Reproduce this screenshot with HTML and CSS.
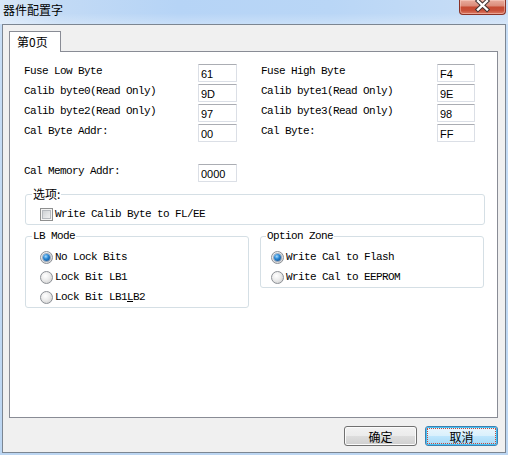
FILE: index.html
```html
<!DOCTYPE html>
<html lang="zh">
<head>
<meta charset="utf-8">
<title>器件配置字</title>
<link rel="stylesheet" href="styles.css">
</head>
<body>
<div class="window">
  <div class="titlebar">
    <span class="title">器件配置字</span>
    <div class="close">
      <svg width="45" height="14" viewBox="0 0 45 14">
        <path d="M18 1 L27 9.5 M27 1 L18 9.5" stroke="#3e3232" stroke-width="4.4" stroke-linecap="square" fill="none"/>
        <path d="M18 1 L27 9.5 M27 1 L18 9.5" stroke="#ffffff" stroke-width="2.4" stroke-linecap="square" fill="none"/>
      </svg>
    </div>
  </div>
  <div class="client">
    <div class="tabstrip"><div class="tab">第0页</div></div>
    <div class="panel">
      <div class="fields">
        <span class="lbl">Fuse Low Byte</span><input class="edit" value="61" readonly><span></span>
        <span class="lbl">Fuse High Byte</span><input class="edit edit-r" value="F4" readonly>
        <span class="lbl">Calib byte0(Read Only)</span><input class="edit" value="9D" readonly><span></span>
        <span class="lbl">Calib byte1(Read Only)</span><input class="edit edit-r" value="9E" readonly>
        <span class="lbl">Calib byte2(Read Only)</span><input class="edit" value="97" readonly><span></span>
        <span class="lbl">Calib byte3(Read Only)</span><input class="edit edit-r" value="98" readonly>
        <span class="lbl">Cal Byte Addr:</span><input class="edit" value="00" readonly><span></span>
        <span class="lbl">Cal Byte:</span><input class="edit edit-r" value="FF" readonly>
      </div>
      <div class="memrow">
        <span class="lbl memlbl">Cal Memory Addr:</span><input class="edit" value="0000" readonly>
      </div>
      <div class="group opts">
        <span class="legend cjk">选项:</span>
        <div class="opt"><span class="check"></span><span class="lbl">Write Calib Byte to FL/EE</span></div>
      </div>
      <div class="grouprow">
        <div class="group lbmode">
          <span class="legend">LB Mode</span>
          <div class="opt"><span class="radio on"></span><span class="lbl">No Lock Bits</span></div>
          <div class="opt"><span class="radio"></span><span class="lbl">Lock Bit LB1</span></div>
          <div class="opt"><span class="radio"></span><span class="lbl">Lock Bit LB1<u>L</u>B2</span></div>
        </div>
        <div class="group zone">
          <span class="legend zlegend">Option Zone</span>
          <div class="opt"><span class="radio on"></span><span class="lbl">Write Cal to Flash</span></div>
          <div class="opt"><span class="radio"></span><span class="lbl">Write Cal to EEPROM</span></div>
        </div>
      </div>
    </div>
    <div class="buttons">
      <button class="btn">确定</button>
      <button class="btn default">取消</button>
    </div>
  </div>
</div>
</body>
</html>
```
FILE: styles.css
```css
html, body {
  margin: 0;
  padding: 0;
  background: #c4dbf4;
}
.window {
  width: 508px;
  height: 455px;
  display: flex;
  flex-direction: column;
  background: linear-gradient(#c8def6, #bcd6f2);
  overflow: hidden;
}
.titlebar {
  height: 24px;
  flex: none;
  display: flex;
  justify-content: space-between;
  align-items: flex-start;
  padding: 0 2px 0 3px;
  background:
    linear-gradient(to bottom, rgba(255,255,255,0) 0%, rgba(255,255,255,0) 55%, rgba(255,255,255,0.25) 100%),
    linear-gradient(to right, #d9e8f8 0%, #c2daf5 12%, #b6d4f6 35%, #b9d6f6 65%, #c9def6 100%);
}
.title {
  font-family: "Noto Sans CJK SC", sans-serif;
  font-size: 12px;
  line-height: 20px;
  color: #000;
}
.close {
  width: 47px;
  height: 15px;
  box-sizing: border-box;
  border: 1px solid #8a3226;
  border-top: none;
  border-radius: 0 0 4px 4px;
  background: linear-gradient(#e9ad9e 0%, #dc8d7c 40%, #c64b33 52%, #c8503a 75%, #dc7c66 100%);
  box-shadow: inset 0 0 0 1px rgba(255,220,210,0.45);
}
.close svg { display: block; }
.client {
  flex: none;
  height: 429px;
  box-sizing: border-box;
  margin: 0 2px 2px 2px;
  border: 1px solid #7c8692;
  background: #f0f0f0;
  padding: 6px 7px 6px 6px;
  display: flex;
  flex-direction: column;
}
.tabstrip {
  height: 20px;
  display: flex;
}
.tab {
  position: relative;
  z-index: 1;
  width: 52px;
  height: 21px;
  box-sizing: border-box;
  border: 1px solid #898c95;
  border-bottom: none;
  background: #fff;
  margin-bottom: -1px;
  padding-left: 7px;
  font-family: "Noto Sans CJK SC", sans-serif;
  font-size: 12px;
  line-height: 19px;
  color: #000;
}
.panel {
  height: 367px;
  box-sizing: border-box;
  border: 1px solid #898c95;
  background: #fff;
  padding: 12px 0 0 0;
}
.lbl {
  font-family: "Liberation Mono", "DejaVu Sans Mono", monospace;
  font-size: 11px;
  letter-spacing: -0.6px;
  color: #000;
  white-space: pre;
}
.fields {
  display: grid;
  grid-template-columns: 174px 39px 24px 176px 38px;
  grid-auto-rows: 18px;
  row-gap: 2px;
  padding-left: 14px;
}
.fields .lbl {
  line-height: 14px;
}
.edit {
  width: 39px;
  height: 18px;
  box-sizing: border-box;
  margin: 0;
  padding: 1px 0 0 2px;
  border: 1px solid #dbdfe6;
  border-top-color: #abadb3;
  border-radius: 1px;
  background: #fff;
  font-family: "Liberation Sans", Arial, sans-serif;
  font-size: 11px;
  color: #000;
  outline: none;
}
.edit-r { width: 38px; }
.memrow {
  display: flex;
  margin-top: 22px;
  padding-left: 14px;
}
.memlbl {
  width: 174px;
  line-height: 14px;
}
.group {
  position: relative;
  box-sizing: border-box;
  border: 1px solid #d5dfe5;
  border-radius: 3px;
  background: #fff;
}
.legend {
  position: absolute;
  top: -7px;
  left: 6px;
  padding: 0 1px;
  background: #fff;
  font-family: "Liberation Mono", "DejaVu Sans Mono", monospace;
  font-size: 11px;
  letter-spacing: -0.6px;
  line-height: 12px;
  white-space: pre;
}
.legend.cjk {
  font-family: "Noto Sans CJK SC", sans-serif;
  font-size: 12px;
  letter-spacing: 0;
}
.zlegend { left: 5px; }
.opts {
  margin: 12px 0 0 15px;
  width: 460px;
  height: 31px;
  padding: 9px 0 0 14px;
}
.opt {
  height: 20px;
  display: flex;
  align-items: center;
  gap: 2px;
}
.opt .lbl { line-height: 14px; }
.grouprow {
  display: flex;
  align-items: flex-start;
  gap: 11px;
  margin: 11px 0 0 15px;
}
.lbmode {
  width: 224px;
  height: 72px;
  padding: 10px 0 0 14px;
}
.zone {
  width: 224px;
  height: 52px;
  padding: 10px 0 0 10px;
}
.check {
  width: 13px;
  height: 13px;
  box-sizing: border-box;
  border: 1px solid #8e8f8f;
  background: linear-gradient(135deg, #c5c8cc 0%, #e2e4e6 55%, #f6f6f6 100%);
  box-shadow: inset 0 0 0 1px #f4f4f4, inset 0 0 0 2px #b5b9be;
  flex: none;
}
.radio {
  width: 13px;
  height: 13px;
  box-sizing: border-box;
  border-radius: 50%;
  border: 1px solid #8c9096;
  background: radial-gradient(circle at 40% 35%, #ffffff 0%, #ececec 45%, #c8c8c8 100%);
  display: flex;
  align-items: center;
  justify-content: center;
  flex: none;
}
.radio.on::after {
  content: "";
  width: 7px;
  height: 7px;
  border-radius: 50%;
  background: radial-gradient(circle at 40% 35%, #a8dcff 0%, #2a88d4 40%, #0b3f7e 100%);
  box-shadow: 0 0 0 1px rgba(30,70,120,0.4);
}
.buttons {
  display: flex;
  justify-content: flex-end;
  gap: 8px;
  margin-top: 8px;
}
.btn {
  width: 73px;
  height: 20px;
  margin: 0;
  padding: 0;
  box-sizing: border-box;
  border: 1px solid #707070;
  border-radius: 3px;
  background: linear-gradient(#f2f2f2 0%, #ebebeb 50%, #dddddd 51%, #cfcfcf 100%);
  box-shadow: inset 0 0 0 1px #fbfbfb;
  font-family: "Noto Sans CJK SC", sans-serif;
  font-size: 12px;
  line-height: 17px;
  color: #000;
}
.btn.default {
  border-color: #3c7fb1;
  background: linear-gradient(#eaf6fd 0%, #d9f0fc 50%, #bee6fd 51%, #a7d9f5 100%);
  box-shadow: inset 0 0 0 1px #48c4f5;
  outline: 1px dotted #c24a3e;
  outline-offset: -3px;
}
```
